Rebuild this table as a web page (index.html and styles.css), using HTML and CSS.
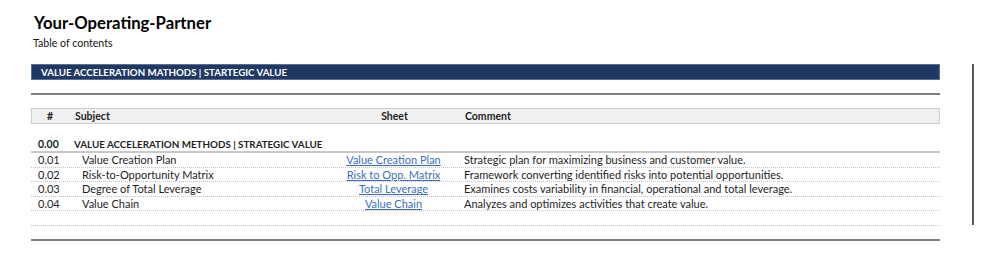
FILE: index.html
```html
<!DOCTYPE html>
<html>
<head>
<meta charset="utf-8">
<link rel="stylesheet" href="styles.css">
</head>
<body>
<div class="page">
  <div class="sheet">
    <h1 class="title">Your-Operating-Partner</h1>
    <div class="subtitle">Table of contents</div>
    <div class="banner">VALUE ACCELERATION MATHODS | STARTEGIC VALUE</div>
    <div class="rule-thick top-rule"></div>
    <div class="grid head">
      <div class="c-num center">#</div>
      <div class="c-subj">Subject</div>
      <div class="c-sheet center">Sheet</div>
      <div class="c-comm">Comment</div>
    </div>
    <div class="grid section">
      <div class="c-num">0.00</div>
      <div class="c-subj">VALUE ACCELERATION METHODS | STRATEGIC VALUE</div>
      <div class="c-sheet"></div>
      <div class="c-comm"></div>
    </div>
    <div class="grid row">
      <div class="c-num">0.01</div>
      <div class="c-subj indent">Value Creation Plan</div>
      <div class="c-sheet center"><a href="#">Value Creation Plan</a></div>
      <div class="c-comm">Strategic plan for maximizing business and customer value.</div>
    </div>
    <div class="grid row">
      <div class="c-num">0.02</div>
      <div class="c-subj indent">Risk-to-Opportunity Matrix</div>
      <div class="c-sheet center"><a href="#">Risk to Opp. Matrix</a></div>
      <div class="c-comm">Framework converting identified risks into potential opportunities.</div>
    </div>
    <div class="grid row">
      <div class="c-num">0.03</div>
      <div class="c-subj indent">Degree of Total Leverage</div>
      <div class="c-sheet center"><a href="#">Total Leverage</a></div>
      <div class="c-comm">Examines costs variability in financial, operational and total leverage.</div>
    </div>
    <div class="grid row">
      <div class="c-num">0.04</div>
      <div class="c-subj indent">Value Chain</div>
      <div class="c-sheet center"><a href="#">Value Chain</a></div>
      <div class="c-comm">Analyzes and optimizes activities that create value.</div>
    </div>
    <div class="grid row empty">
      <div class="c-num"></div>
      <div class="c-subj"></div>
      <div class="c-sheet"></div>
      <div class="c-comm"></div>
    </div>
    <div class="rule-thick bottom-rule"></div>
  </div>
  <div class="page-break"></div>
</div>
</body>
</html>
```

FILE: styles.css
```css
* { box-sizing: border-box; }
html, body {
  margin: 0;
  padding: 0;
  background: #ffffff;
}
body {
  font-family: Lato, "Liberation Sans", sans-serif;
  color: #1e1e1e;
  width: 1005px;
  height: 268px;
  overflow: hidden;
}
.page {
  display: flex;
  align-items: flex-start;
  padding-left: 31px;
}
.sheet {
  width: 909px;
  display: flex;
  flex-direction: column;
}
.title {
  margin: 12px 0 0 3px;
  font-size: 16.7px;
  line-height: 22px;
  font-weight: 700;
  color: #000;
}
.subtitle {
  margin: 3px 0 0 2px;
  font-size: 10.6px;
  line-height: 12px;
  color: #111;
}
.banner {
  margin-top: 15px;
  height: 16px;
  background: #203864;
  border: 1px solid #5a6f96;
  color: #fff;
  font-weight: 700;
  font-size: 9.7px;
  line-height: 14px;
  padding-left: 9px;
}
.rule-thick {
  height: 2px;
  background: #7f7f7f;
}
.top-rule { margin-top: 13px; }
.grid {
  display: grid;
  grid-template-columns: 36px 263px 127px 1fr;
  font-size: 11px;
  align-items: center;
}
.grid > div { white-space: nowrap; }
.center { text-align: center; }
.head {
  margin-top: 13px;
  height: 16px;
  background: #f0f0f0;
  border: 1px solid #cfcfcf;
  font-weight: 700;
  font-size: 10.5px;
}
.head .c-subj { padding-left: 7px; }
.head .c-comm { padding-left: 7px; }
.head .c-num { padding-left: 0; }
.section {
  margin-top: 12px;
  height: 17px;
  font-weight: 700;
  font-size: 9.8px;
  border-bottom: 2px solid #c8c8c8;
}
.section .c-num { font-size: 10.5px; }
.section .c-subj { padding-left: 7px; }
.c-num { padding-left: 7px; }
.row {
  height: 14.6px;
  border-bottom: 1px dotted #c4c4c4;
}
.indent { padding-left: 15px; }
.c-comm { padding-left: 7px; }
a {
  color: #3a6fc0;
  text-decoration: underline;
}
.bottom-rule { margin-top: 13px; }
.page-break {
  margin-left: 32px;
  margin-top: 64px;
  width: 2px;
  height: 161px;
  background: #5a5a5a;
}
```
